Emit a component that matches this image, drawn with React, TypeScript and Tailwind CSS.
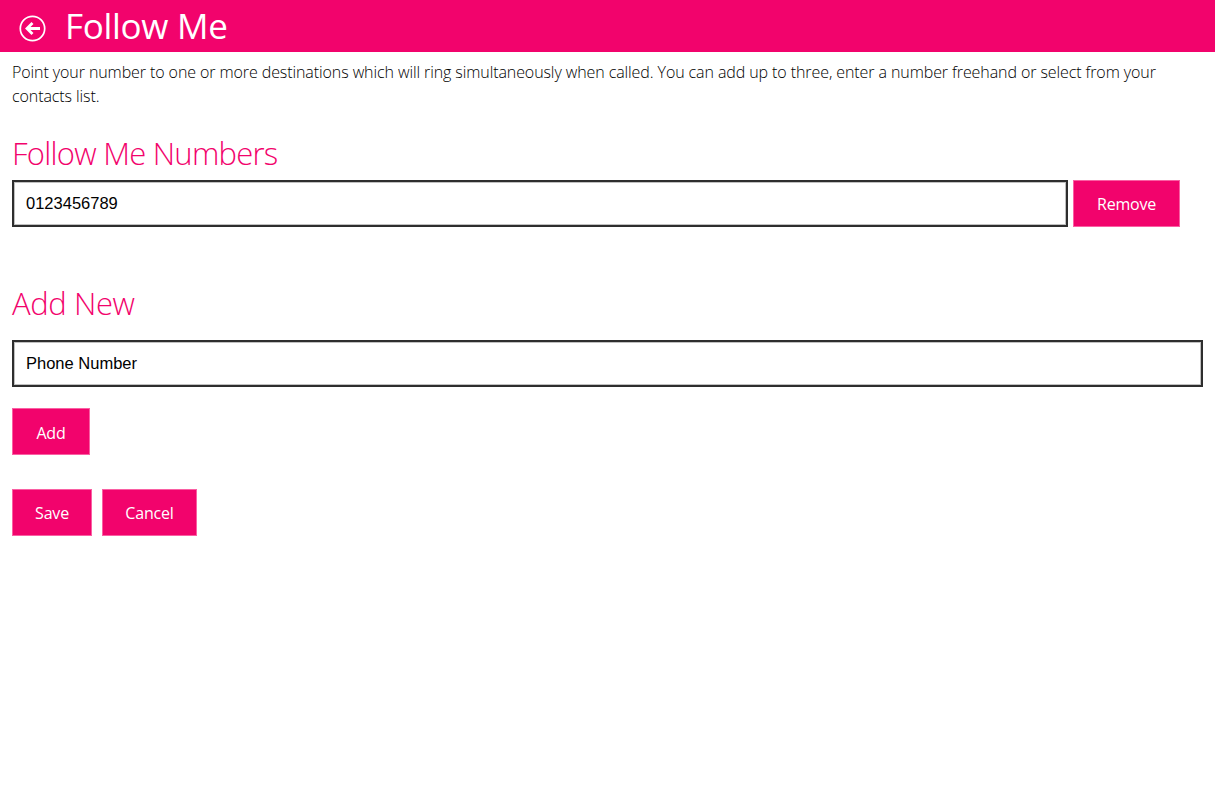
function Btn({ label, w, extra = "" }: { label: string; w: string; extra?: string }) {
  return (
    <button className={`h-[47px] ${w} ${extra} bg-[#f2036c] border border-[#fa5fa3] text-white text-[16px] font-normal flex items-center justify-center font-['Open_Sans',sans-serif] tracking-[-0.2px]`}>
      {label}
    </button>
  );
}

export default function App() {
  return (
    <div className="min-h-[810px] bg-white font-['Open_Sans',sans-serif]">
      <header className="h-[52px] bg-[#f2036c] flex items-center">
        <svg width="27" height="27" viewBox="0 0 27 27" fill="none" stroke="white" className="ml-[19px] mt-[4px]">
          <circle cx="13.5" cy="13.5" r="12.2" strokeWidth="1.7" />
          <path d="M21 13.5H8M13.5 8L8 13.5L13.5 19" strokeWidth="2.8" />
        </svg>
        <h1 className="ml-[19px] text-[35px] leading-[52px] font-normal text-white tracking-[-0.3px]">Follow Me</h1>
      </header>
      <main className="px-[12px]">
        <p className="mt-[8px] text-[16px] leading-[24px] font-light text-[#000000] w-[1170px] tracking-[-0.09px]">
          Point your number to one or more destinations which will ring simultaneously when called. You can add up to three, enter a number freehand or select from your contacts list.
        </p>
        <h2 className="mt-[24px] text-[31px] leading-[42px] font-light text-[#f2036c] tracking-[-0.75px]">Follow Me Numbers</h2>
        <div className="mt-[6px] flex gap-[5px]">
          <div className="w-[1056px] h-[47px] border-2 border-[#2e2e2e] shadow-[inset_0_0_0_1px_#c0c0c0] flex items-center pl-[12px] font-['Liberation_Sans',sans-serif] text-[16.5px] text-black">0123456789</div>
          <Btn label="Remove" w="w-[107px]" />
        </div>
        <h2 className="mt-[55px] text-[31px] leading-[42px] font-light text-[#f2036c] tracking-[-0.4px]">Add New</h2>
        <div className="mt-[16px] w-[1191px] h-[47px] border-2 border-[#2e2e2e] shadow-[inset_0_0_0_1px_#c0c0c0] flex items-center pl-[12px] font-['Liberation_Sans',sans-serif] text-[16.5px] text-black">Phone Number</div>
        <div className="mt-[21px]">
          <Btn label="Add" w="w-[78px]" extra="pt-[2px]" />
        </div>
        <div className="mt-[34px] flex gap-[10px]">
          <Btn label="Save" w="w-[80px]" />
          <Btn label="Cancel" w="w-[95px]" />
        </div>
      </main>
    </div>
  );
}
